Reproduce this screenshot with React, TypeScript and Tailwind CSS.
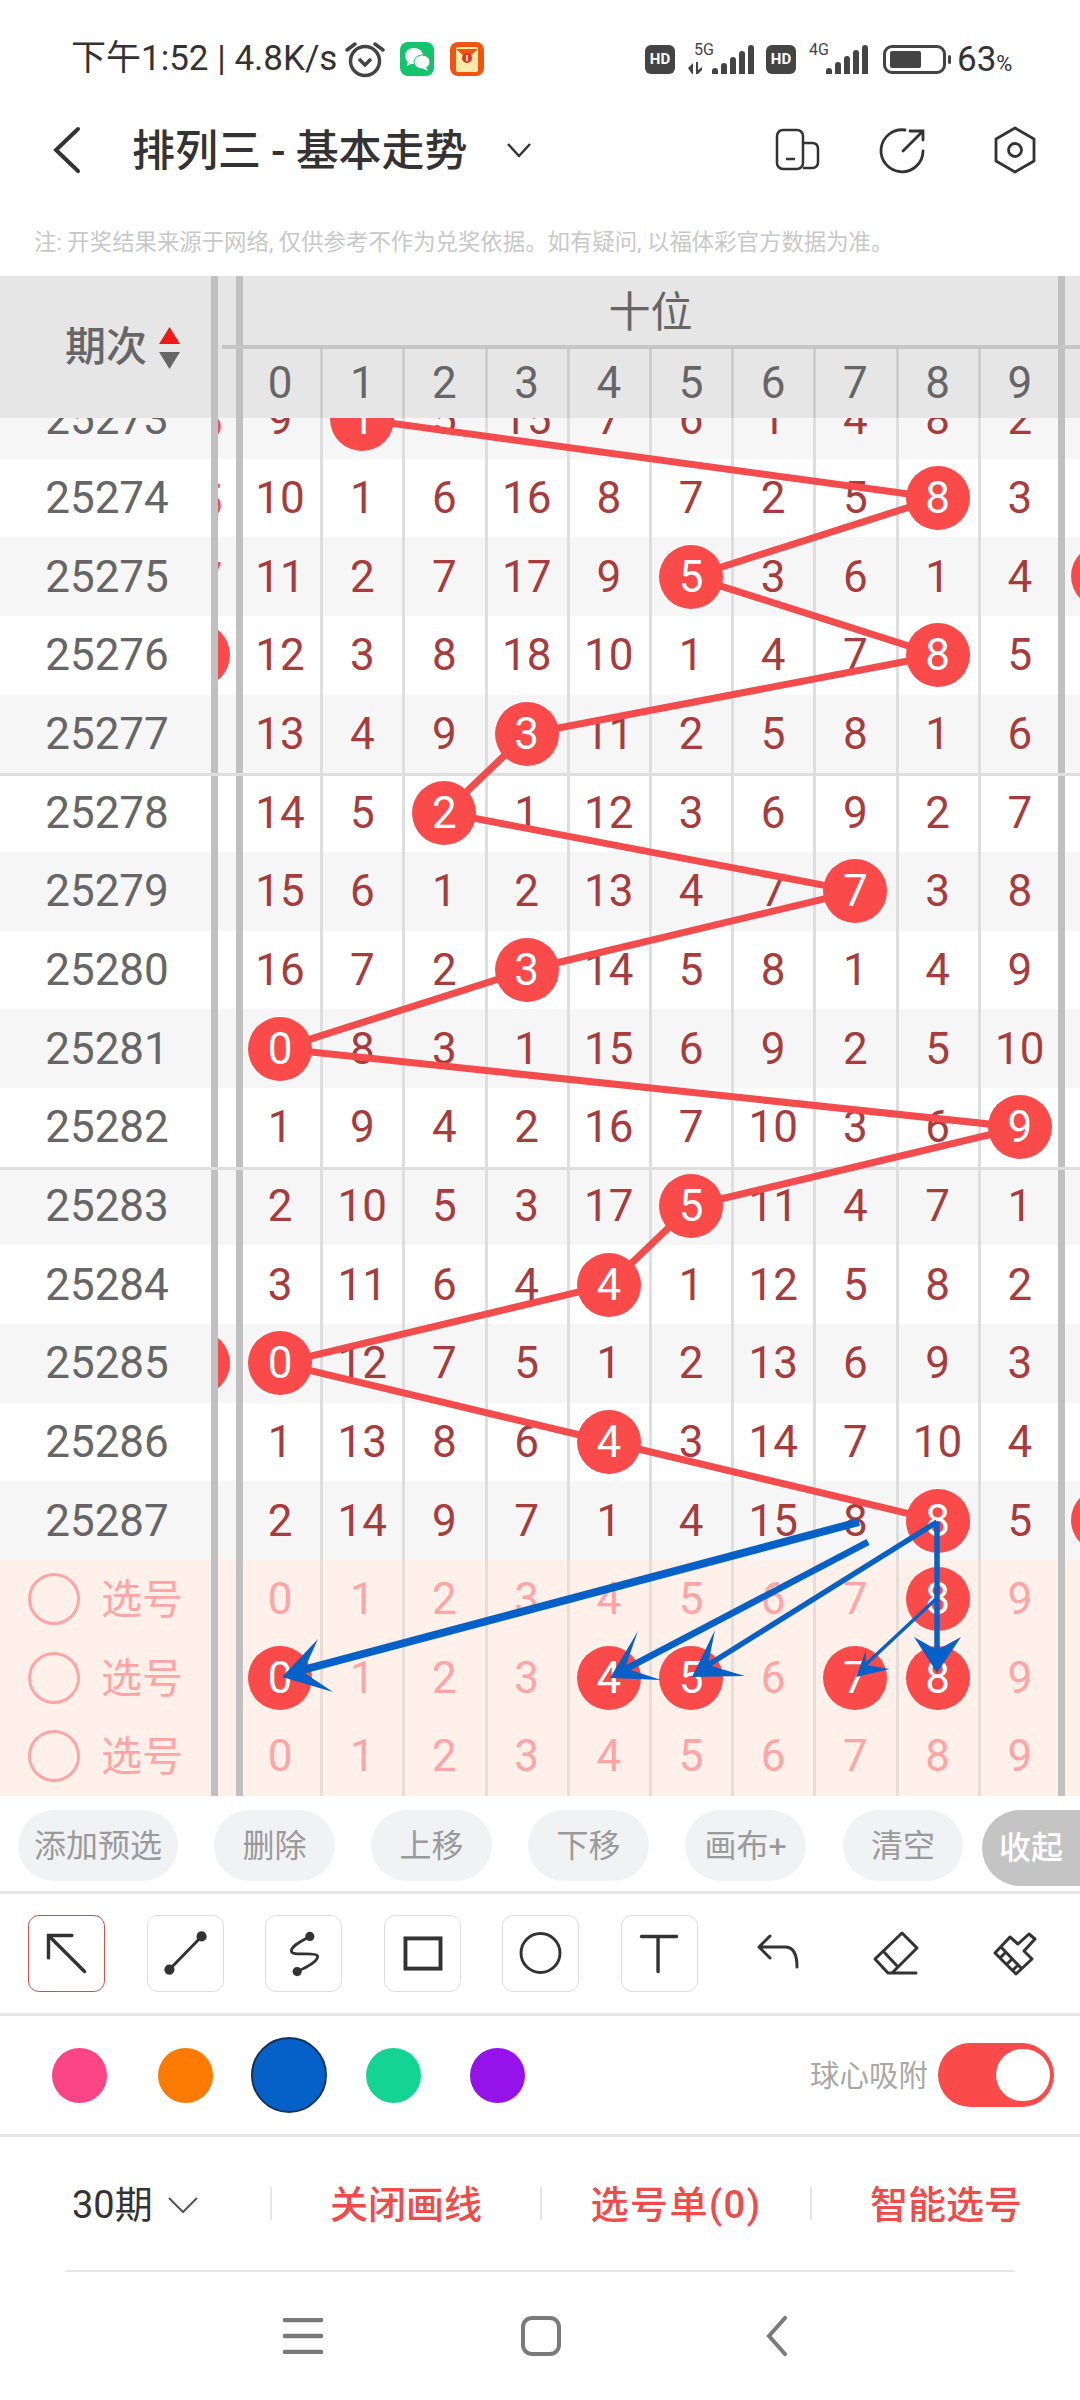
const ROW_H = 78.67;
const colX = (c: number) => 280.3 + 82.2 * c;
const rowY = (r: number) => 419.3 + ROW_H * r;

// values for columns 0-9, ball = index of the drawn number
const rows = [
  { no: "25273", v: [9, 1, 5, 15, 7, 6, 1, 4, 8, 2], ball: 1, left: "5" },
  { no: "25274", v: [10, 1, 6, 16, 8, 7, 2, 5, 8, 3], ball: 8, left: "5" },
  { no: "25275", v: [11, 2, 7, 17, 9, 5, 3, 6, 1, 4], ball: 5, left: "7", rightBall: true },
  { no: "25276", v: [12, 3, 8, 18, 10, 1, 4, 7, 8, 5], ball: 8, leftBall: true },
  { no: "25277", v: [13, 4, 9, 3, 11, 2, 5, 8, 1, 6], ball: 3 },
  { no: "25278", v: [14, 5, 2, 1, 12, 3, 6, 9, 2, 7], ball: 2, topLine: true },
  { no: "25279", v: [15, 6, 1, 2, 13, 4, 7, 7, 3, 8], ball: 7 },
  { no: "25280", v: [16, 7, 2, 3, 14, 5, 8, 1, 4, 9], ball: 3 },
  { no: "25281", v: [0, 8, 3, 1, 15, 6, 9, 2, 5, 10], ball: 0 },
  { no: "25282", v: [1, 9, 4, 2, 16, 7, 10, 3, 6, 9], ball: 9 },
  { no: "25283", v: [2, 10, 5, 3, 17, 5, 11, 4, 7, 1], ball: 5, topLine: true },
  { no: "25284", v: [3, 11, 6, 4, 4, 1, 12, 5, 8, 2], ball: 4 },
  { no: "25285", v: [0, 12, 7, 5, 1, 2, 13, 6, 9, 3], ball: 0, leftBall: true },
  { no: "25286", v: [1, 13, 8, 6, 4, 3, 14, 7, 10, 4], ball: 4 },
  { no: "25287", v: [2, 14, 9, 7, 1, 4, 15, 8, 8, 5], ball: 8, rightBall: true },
] as {
  no: string;
  v: number[];
  ball: number;
  left?: string;
  leftBall?: boolean;
  rightBall?: boolean;
  topLine?: boolean;
}[];

const picks = [[8], [0, 4, 5, 7, 8], []];
const digits = [0, 1, 2, 3, 4, 5, 6, 7, 8, 9];

function Sep() {
  return <div className="w-[7px] h-full shrink-0 bg-[#c0c0c0]" />;
}

function Ball({ n }: { n: number }) {
  return (
    <span className="relative z-10 flex w-[64px] h-[64px] items-center justify-center rounded-full bg-[#fb4a4a] text-white">
      {n}
    </span>
  );
}

function Cell({ i, children, line = "bg-[#dedede]" }: { i: number; children: React.ReactNode; line?: string }) {
  return (
    <div className={`relative flex w-[82.2px] h-full shrink-0 items-center justify-center ${i === 0 ? "-ml-[4px]" : ""}`}>
      {children}
      {i < 9 && <i className={`absolute right-[-2px] top-0 bottom-0 w-[3px] ${line}`} />}
    </div>
  );
}

function Row({ r, index }: { r: (typeof rows)[number]; index: number }) {
  return (
    <div className={`relative flex h-[78.67px] text-[44px] text-[#a83c3c] ${index % 2 === 0 ? "bg-[#f6f6f6]" : "bg-white"}`}>
      <div className="flex w-[211px] shrink-0 items-center justify-center pl-[3px] text-[44px] text-[#666666]">{r.no}</div>
      <Sep />
      <div className="relative w-[18px] shrink-0 overflow-hidden">
        {r.left && <span className="absolute left-[-22px] top-[9px] w-[28px] text-center text-[#f4504f]">{r.left}</span>}
        {r.leftBall && <span className="absolute left-[-52px] top-[7px] w-[64px] h-[64px] rounded-full bg-[#fb4a4a]" />}
      </div>
      <Sep />
      {r.v.map((n, i) => (
        <Cell key={i} i={i}>
          {i === r.ball ? <Ball n={n} /> : n}
        </Cell>
      ))}
      <div className="w-[7px] h-full shrink-0 -ml-[3px] bg-[#c0c0c0]" />
      <div className="relative flex-1 overflow-hidden">
        {r.rightBall && <span className="absolute left-[6px] top-[7px] w-[64px] h-[64px] rounded-full bg-[#fb4a4a]" />}
      </div>
      {r.topLine && <i className="absolute left-0 right-0 top-0 h-[3px] bg-[#dedede]" />}
    </div>
  );
}

function PickRow({ balls }: { balls: number[] }) {
  return (
    <div className="relative flex h-[78.67px] bg-[#fff0ea] text-[44px] text-[#ffa5a5]">
      <div className="flex w-[211px] shrink-0 items-center pl-[28px]">
        <span className="w-[52px] h-[52px] rounded-full border-[3px] border-[#ffa5a5]" />
        <span className="ml-[21px] pt-[3px] text-[41px]">选号</span>
      </div>
      <Sep />
      <div className="w-[18px] shrink-0" />
      <Sep />
      {digits.map((d) => (
        <Cell key={d} i={d} line="bg-[#e6dedb]">
          {balls.includes(d) ? <Ball n={d} /> : d}
        </Cell>
      ))}
      <div className="w-[7px] h-full shrink-0 -ml-[3px] bg-[#c0c0c0]" />
    </div>
  );
}

function Overlay() {
  const pts = rows.map((r, i) => `${colX(r.ball)},${rowY(i)}`).join(" ");
  const blue = "#0561c8";
  return (
    <>
      <svg className="absolute left-0 top-0 z-[5]" width={1080} height={1378} viewBox="0 418 1080 1378">
        <polyline points={pts} fill="none" stroke="#f44c4c" strokeWidth={7} />
      </svg>
      <svg className="absolute left-0 top-0 z-20" width={1080} height={1378} viewBox="0 418 1080 1378">
        <g stroke={blue} fill="none">
          <line x1={859} y1={1522} x2={295} y2={1672} strokeWidth={8} />
          <line x1={868} y1={1542} x2={620} y2={1672} strokeWidth={6.5} />
          <line x1={937} y1={1522} x2={700} y2={1670} strokeWidth={5.5} />
          <line x1={937} y1={1598} x2={862} y2={1668} strokeWidth={3.5} />
          <line x1={937} y1={1522} x2={937} y2={1655} strokeWidth={5.5} />
        </g>
        <g fill={blue}>
          <polygon points="282,1677 318,1639 303,1672 333,1692" />
          <polygon points="610,1678 638,1631 625,1668 661,1680" />
          <polygon points="692,1677 715,1630 708,1665 745,1676" />
          <polygon points="856,1677 866,1650 866,1665 890,1669" />
          <polygon points="937,1673 914,1637 937,1650 961,1637" />
        </g>
      </svg>
    </>
  );
}

function Signal({ bars }: { bars: number[] }) {
  return (
    <div className="flex items-end gap-[3px]">
      {bars.map((h, i) => (
        <span key={i} className="w-[6px] rounded-t-[3px] bg-[#444444]" style={{ height: h }} />
      ))}
    </div>
  );
}

function HD() {
  return (
    <span className="flex w-[30px] h-[29px] items-center justify-center rounded-[6px] bg-[#444444] text-[15px] font-bold text-white">
      HD
    </span>
  );
}

function StatusBar() {
  return (
    <div className="flex h-[118px] items-center pl-[71px] text-[35px] text-[#333333]">
      <span className="w-[268px] whitespace-nowrap">下午1:52 | 4.8K/s</span>
      <svg className="ml-[6px]" width={40} height={38} viewBox="0 0 40 38" fill="none" stroke="#444444">
        <circle cx={20} cy={21} r={14.5} strokeWidth={3.5} />
        <path d="M14 19 L20 25 L26 19" strokeWidth={3.5} />
        <path d="M2 10 L10 4 M38 10 L30 4" strokeWidth={3.5} strokeLinecap="round" />
      </svg>
      <svg className="ml-[15px]" width={34} height={34} viewBox="0 0 34 34">
        <rect width={34} height={34} rx={8} fill="#13c46a" />
        <ellipse cx={14} cy={14} rx={9} ry={8} fill="#fff" />
        <path d="M8 19 L7 24 L13 21 Z" fill="#fff" />
        <ellipse cx={22} cy={20} rx={8} ry={7} fill="#fff" stroke="#13c46a" strokeWidth={1} />
        <path d="M26 25 L28 29 L22 26 Z" fill="#fff" />
      </svg>
      <svg className="ml-[16px]" width={34} height={34} viewBox="0 0 34 34">
        <rect width={34} height={34} rx={8} fill="#f2540f" />
        <rect x={6} y={5} width={22} height={25} rx={2} fill="#ffe9a8" />
        <path d="M6 7 H28 L17 17 Z" fill="#f2540f" />
        <circle cx={17} cy={16} r={5} fill="#e8301c" />
        <rect x={16} y={13} width={2} height={6} fill="#ffe9a8" />
      </svg>
      <div className="ml-[161px]">
        <HD />
      </div>
      <div className="relative ml-[12px] w-[67px] h-[29px]">
        <span className="absolute left-[7px] top-[-3px] text-[16px] leading-none text-[#444444]">5G</span>
        <svg className="absolute left-0 bottom-0" width={20} height={12} viewBox="0 0 20 12" fill="#444444">
          <path d="M1 6 L6 1 V12 H5 Z M9 0 H11 V8 L15 5 V8 L11 12 H9 Z" />
        </svg>
        <div className="absolute right-0 bottom-0">
          <Signal bars={[6, 11, 17, 23, 29]} />
        </div>
      </div>
      <div className="ml-[12px]">
        <HD />
      </div>
      <div className="relative ml-[6px] w-[66px] h-[29px]">
        <span className="absolute left-[7px] top-[-3px] text-[16px] leading-none text-[#444444]">4G</span>
        <div className="absolute right-0 bottom-0">
          <Signal bars={[6, 12, 18, 24, 29]} />
        </div>
      </div>
      <div className="ml-[15px] flex w-[63px] h-[29px] items-center rounded-[9px] border-[3px] border-[#444444] pl-[4px]">
        <span className="w-[31px] h-[17px] rounded-[2px] bg-[#444444]" />
      </div>
      <span className="ml-[2px] w-[3px] h-[9px] rounded-full bg-[#444444]" />
      <span className="ml-[6px] whitespace-nowrap text-[35px] leading-none">
        63<span className="text-[22px]">%</span>
      </span>
    </div>
  );
}

function TitleBar() {
  return (
    <div className="flex h-[64px] items-center text-[#333333]">
      <svg className="ml-[52px]" width={30} height={48} viewBox="0 0 30 48" fill="none" stroke="#333333" strokeWidth={4} strokeLinecap="round">
        <path d="M26 3 L4 24 L26 45" />
      </svg>
      <h1 className="ml-[50px] whitespace-nowrap pt-[2px] text-[43px] font-medium">
        排列三<span className="mx-[10px]">-</span>基本走势
      </h1>
      <svg className="ml-[38px]" width={26} height={16} viewBox="0 0 26 16" fill="none" stroke="#333333" strokeWidth={2.5}>
        <path d="M2 2 L13 14 L24 2" />
      </svg>
      <div className="ml-auto mr-[43px] flex items-center gap-[57px]">
        <svg width={46} height={44} viewBox="0 0 46 44" fill="none" stroke="#333333" strokeWidth={2.5}>
          <rect x={2} y={2} width={26} height={39} rx={6} />
          <path d="M28 15 H37 Q43 15 43 21 V34 Q43 40 37 40 H28" />
          <path d="M11 31 H20" />
        </svg>
        <svg width={50} height={50} viewBox="0 0 50 50" fill="none" stroke="#333333" strokeWidth={2.8} strokeLinecap="round">
          <path d="M27 5 A21 21 0 1 0 45 26" />
          <path d="M25 26 L45 6 M32 6 H45 V15" />
        </svg>
        <svg className="ml-[8px]" width={44} height={50} viewBox="0 0 44 50" fill="none" stroke="#333333" strokeWidth={2.8} strokeLinejoin="round">
          <path d="M22 3 L41 14 V36 L22 47 L3 36 V14 Z" />
          <circle cx={22} cy={25} r={6.5} />
        </svg>
      </div>
    </div>
  );
}

function TableHeader() {
  return (
    <div className="relative flex h-[142px] bg-[#e6e6e6] text-[#666666]">
      <div className="flex w-[211px] shrink-0 items-center pl-[65px] pt-[2px]">
        <span className="text-[41px] font-medium">期次</span>
        <svg className="ml-[12px]" width={21} height={42} viewBox="0 0 21 42">
          <path d="M10.5 0 L21 17 H0 Z" fill="#f01818" />
          <path d="M0 25 H21 L10.5 42 Z" fill="#666666" />
        </svg>
      </div>
      <Sep />
      <div className="w-[18px] shrink-0" />
      <Sep />
      <div className="flex w-[815px] shrink-0 flex-col">
        <div className="flex h-[72px] items-center justify-center text-[42px]">十位</div>
        <div className="flex h-[70px] text-[44px]">
          {digits.map((d) => (
            <Cell key={d} i={d} line="bg-[#cdcdcd]">
              {d}
            </Cell>
          ))}
        </div>
      </div>
      <Sep />
      <i className="absolute left-[222px] right-0 top-[69px] h-[4px] bg-[#c6c6c6]" />
    </div>
  );
}

const pills = [
  { t: "添加预选", c: "w-[160px]" },
  { t: "删除", c: "w-[121px] ml-[36px]" },
  { t: "上移", c: "w-[121px] ml-[36px]" },
  { t: "下移", c: "w-[121px] ml-[36px]" },
  { t: "画布+", c: "w-[121px] ml-[36px]" },
  { t: "清空", c: "w-[120px] ml-[37px]" },
];

function Pills() {
  return (
    <div className="flex h-[98px] items-start border-b-[3px] border-[#e6e6e6] pl-[18px] pt-[14px]">
      {pills.map((p) => (
        <span key={p.t} className={`flex h-[71px] items-center justify-center rounded-full bg-[#f1f2f4] text-[32px] text-[#9a9a9a] ${p.c}`}>
          {p.t}
        </span>
      ))}
      <span className="ml-[19px] flex h-[76px] flex-1 items-center rounded-l-full bg-[#c4c4c4] pl-[17px] text-[32px] font-medium text-white whitespace-nowrap">
        收起
      </span>
    </div>
  );
}

function ToolBtn({ active, children }: { active?: boolean; children: React.ReactNode }) {
  return (
    <span className={`flex w-[77px] h-[77px] items-center justify-center rounded-[11px] border-[1.5px] ${active ? "border-[#d0504e]" : "border-[#dddddd]"}`}>
      <svg width={77} height={77} viewBox="0 0 77 77" fill="none" stroke="#333333" strokeWidth={3.5} strokeLinecap="round">
        {children}
      </svg>
    </span>
  );
}

function Tools() {
  return (
    <div className="flex h-[122px] items-center gap-[41.5px] border-b-[3px] border-[#e6e6e6] pl-[28px]">
      <ToolBtn active>
        <path d="M20 43 V20 H44 M20 20 L57 57" />
      </ToolBtn>
      <ToolBtn>
        <path d="M22 55 L55 21" strokeWidth={3} />
        <circle cx={22} cy={55} r={3.5} fill="#333333" />
        <circle cx={55} cy={21} r={3.5} fill="#333333" />
      </ToolBtn>
      <ToolBtn>
        <path d="M45 21 C38 25 26 30 26 36 C26 42 50 36 53 41 C54 47 40 53 32 57" strokeWidth={2.8} />
        <circle cx={45} cy={21} r={3} fill="#333333" />
        <circle cx={32} cy={57} r={3} fill="#333333" />
      </ToolBtn>
      <ToolBtn>
        <rect x={21} y={23} width={36} height={31} strokeWidth={4} strokeLinecap="butt" />
      </ToolBtn>
      <ToolBtn>
        <circle cx={38.5} cy={38} r={20} strokeWidth={3} />
      </ToolBtn>
      <ToolBtn>
        <path d="M20 21 H56 M37 21 V57" />
      </ToolBtn>
      <svg className="ml-[18px]" width={44} height={44} viewBox="0 0 44 44" fill="none" stroke="#333333" strokeWidth={3} strokeLinecap="round" strokeLinejoin="round">
        <path d="M13 4 L2 15 L13 26 M2 15 H28 C36 15 40 22 40 35" />
      </svg>
      <svg className="ml-[27px]" width={50} height={50} viewBox="0 0 50 50" fill="none" stroke="#333333" strokeWidth={3} strokeLinecap="round" strokeLinejoin="round">
        <path d="M32 4 L47 19 L22 44 H18 L5 30 Z M13 22 L28 38 M18 44 H46" />
      </svg>
      <svg className="ml-[28px]" width={50} height={50} viewBox="0 0 50 50" fill="none" stroke="#333333" strokeWidth={3} strokeLinejoin="round">
        <path d="M6 24 L21 8 L29 15 L40 5 L46 10 L35 22 L43 30 L27 45 Z" />
        <path d="M12 18 L33 40 M11 29 L16 24 M18 35 L23 30 M24 41 L28 37" />
      </svg>
    </div>
  );
}

function Colors() {
  return (
    <div className="flex h-[121px] items-center border-b-[3px] border-[#e6e6e6] pl-[52px]">
      <span className="w-[55px] h-[55px] rounded-full bg-[#fb4584]" />
      <span className="ml-[51px] w-[55px] h-[55px] rounded-full bg-[#ff7a00]" />
      <span className="ml-[38px] w-[76px] h-[76px] rounded-full border-2 border-[#14335c] bg-[#0561c8]" />
      <span className="ml-[39px] w-[55px] h-[55px] rounded-full bg-[#13d492]" />
      <span className="ml-[49px] w-[55px] h-[55px] rounded-full bg-[#9512ea]" />
      <span className="ml-auto pt-[3px] text-[29.5px] text-[#a8a8a8] whitespace-nowrap">球心吸附</span>
      <span className="ml-[10px] mr-[26px] flex w-[116px] h-[64px] items-center justify-end rounded-full bg-[#fb4a4a] pr-[4px]">
        <span className="w-[54px] h-[52px] rounded-full bg-white" />
      </span>
    </div>
  );
}

function BottomBar() {
  const Divider = () => <i className="w-[2px] h-[33px] shrink-0 bg-[#e6e6e6]" />;
  const red = "flex flex-1 items-center justify-center pt-[3px] text-[38px] font-medium text-[#f04a4a] whitespace-nowrap";
  return (
    <div className="flex h-[133px] items-center">
      <div className="flex w-[270px] shrink-0 items-center pl-[72px] pt-[3px] text-[38px] text-[#333333]">
        30期
        <svg className="ml-[15px]" width={30} height={18} viewBox="0 0 30 18" fill="none" stroke="#555555" strokeWidth={2}>
          <path d="M1 2 L15 16 L29 2" />
        </svg>
      </div>
      <Divider />
      <span className={red}>关闭画线</span>
      <Divider />
      <span className={`${red} tracking-[1.5px]`}>选号单(0)</span>
      <Divider />
      <span className={red}>智能选号</span>
    </div>
  );
}

function NavBar() {
  return (
    <div className="mx-[66px] flex h-[130px] items-center border-t-2 border-[#e6e6e6] pl-[217px]">
      <svg width={40} height={36} viewBox="0 0 40 36" fill="none" stroke="#7a7a7a" strokeWidth={4.5} strokeLinecap="round">
        <path d="M2 2 H38 M2 18 H38 M2 34 H38" />
      </svg>
      <svg className="ml-[198px]" width={40} height={40} viewBox="0 0 40 40" fill="none" stroke="#7a7a7a" strokeWidth={4}>
        <rect x={2} y={2} width={36} height={36} rx={9} />
      </svg>
      <svg className="ml-[205px]" width={22} height={40} viewBox="0 0 22 40" fill="none" stroke="#7a7a7a" strokeWidth={4} strokeLinecap="round">
        <path d="M19 2 L3 20 L19 38" />
      </svg>
    </div>
  );
}

export default function App() {
  return (
    <div className="w-[1080px] h-[2400px] overflow-hidden bg-white font-[Roboto,'Noto_Sans_CJK_SC',sans-serif]">
      <StatusBar />
      <TitleBar />
      <div className="flex h-[94px] items-center pl-[34px] pt-[28px] text-[22.4px] text-[#c8c8c8] whitespace-nowrap">
        注: 开奖结果来源于网络, 仅供参考不作为兑奖依据。如有疑问, 以福体彩官方数据为准。
      </div>
      <TableHeader />
      <div className="relative h-[1378px] overflow-hidden">
        <div className="-mt-[38px]">
          {rows.map((r, i) => (
            <Row key={r.no} r={r} index={i} />
          ))}
          {picks.map((b, i) => (
            <PickRow key={i} balls={b} />
          ))}
        </div>
        <Overlay />
      </div>
      <Pills />
      <Tools />
      <Colors />
      <BottomBar />
      <NavBar />
    </div>
  );
}
